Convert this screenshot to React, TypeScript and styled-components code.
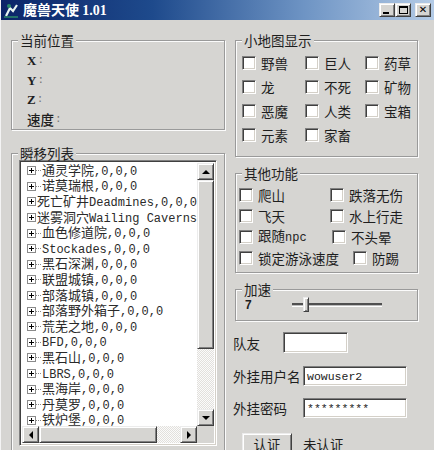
import React from "react";
import styled, { createGlobalStyle } from "styled-components";

const BG = "#d6d5d2";

const GlobalStyle = createGlobalStyle`
  html, body {
    margin: 0;
    padding: 0;
    background: ${BG};
  }
  body {
    font-family: "Noto Sans CJK SC", "Liberation Sans", sans-serif;
    font-size: 13.5px;
    color: #1e1e1e;
  }
  * {
    box-sizing: border-box;
  }
`;

const raised = `
  border: 1px solid;
  border-color: #ececec #404040 #404040 #ececec;
  box-shadow: inset 1px 1px #fff, inset -1px -1px #808080;
  background: ${BG};
`;

const sunken = `
  border: 1px solid;
  border-color: #808080 #fff #fff #808080;
  box-shadow: inset 1px 1px #404040, inset -1px -1px #d4d0c8;
  background: #fff;
`;

const ASCII = /^[\x20-\x7e]+$/;

function Mixed({ text }: { text: string }) {
  return (
    <>
      {text
        .split(/([\x20-\x7e]+)/)
        .filter(Boolean)
        .map((part, i) =>
          ASCII.test(part) ? <Latin key={i}>{part}</Latin> : <span key={i}>{part}</span>
        )}
    </>
  );
}

const places = [
  "通灵学院,0,0,0",
  "诺莫瑞根,0,0,0",
  "死亡矿井Deadmines,0,0,0",
  "迷雾洞穴Wailing Caverns,0,0,0",
  "血色修道院,0,0,0",
  "Stockades,0,0,0",
  "黑石深渊,0,0,0",
  "联盟城镇,0,0,0",
  "部落城镇,0,0,0",
  "部落野外箱子,0,0,0",
  "荒芜之地,0,0,0",
  "BFD,0,0,0",
  "黑石山,0,0,0",
  "LBRS,0,0,0",
  "黑海岸,0,0,0",
  "丹莫罗,0,0,0",
  "铁炉堡,0,0,0",
];

const minimap = [
  ["野兽", "巨人", "药草"],
  ["龙", "不死", "矿物"],
  ["恶魔", "人类", "宝箱"],
  ["元素", "家畜"],
];

const extras: { items: [string, string]; first: number }[] = [
  { items: ["爬山", "跌落无伤"], first: 91 },
  { items: ["飞天", "水上行走"], first: 91 },
  { items: ["跟随npc", "不头晕"], first: 93 },
  { items: ["锁定游泳速度", "防踢"], first: 114 },
];

function Check({ label }: { label: string }) {
  return (
    <CheckItem>
      <CheckBox />
      <span>
        <Mixed text={label} />
      </span>
    </CheckItem>
  );
}

export default function App() {
  return (
    <>
      <GlobalStyle />
      <Window>
        <TitleBar>
          <AppIcon viewBox="0 0 16 16">
            <path d="M3 14 L7 6 L10 9 L14 3" stroke="#e8f4f0" strokeWidth="2.2" fill="none" />
            <circle cx="6" cy="4" r="2" fill="#2a8a6a" />
            <path d="M1 15 H15" stroke="#2a8a6a" strokeWidth="1.5" />
          </AppIcon>
          <Title>
            魔兽天使 <TitleNum>1.01</TitleNum>
          </Title>
          <CaptionButtons>
            <CapBtn>
              <MinGlyph />
            </CapBtn>
            <CapBtn>
              <MaxGlyph />
            </CapBtn>
            <CapBtn $gap>
              <CloseGlyph>✕</CloseGlyph>
            </CapBtn>
          </CaptionButtons>
        </TitleBar>

        <Body>
          <LeftCol>
            <Group $top={20} $height={90}>
              <Legend>当前位置</Legend>
              <PosList>
                <PosRow>
                  <Axis>X</Axis>
                  <Colon>:</Colon>
                </PosRow>
                <PosRow>
                  <Axis>Y</Axis>
                  <Colon>:</Colon>
                </PosRow>
                <PosRow>
                  <Axis>Z</Axis>
                  <Colon>:</Colon>
                </PosRow>
                <PosRow>
                  <span>速度</span>
                  <Colon>:</Colon>
                </PosRow>
              </PosList>
            </Group>

            <Group $top={23} $height={300}>
              <Legend>瞬移列表</Legend>
              <ListBox>
                <TreeArea>
                  {places.map((p) => (
                    <TreeRow key={p}>
                      <Expander />
                      <DotLine />
                      <RowText>
                        <Mixed text={p} />
                      </RowText>
                    </TreeRow>
                  ))}
                </TreeArea>
                <VScroll>
                  <ArrowBtn $dir="up" />
                  <Thumb $size={169} />
                  <Track />
                  <ArrowBtn $dir="down" />
                </VScroll>
                <HScroll>
                  <ArrowBtn $dir="left" />
                  <Thumb $size={118} />
                  <Track />
                  <ArrowBtn $dir="right" />
                </HScroll>
                <Corner />
              </ListBox>
            </Group>
          </LeftCol>

          <RightCol>
            <Group $top={20} $height={117}>
              <Legend>小地图显示</Legend>
              <MapGrid>
                {minimap.flat().map((m) => (
                  <Check key={m} label={m} />
                ))}
              </MapGrid>
            </Group>

            <Group $top={16} $height={100}>
              <Legend>其他功能</Legend>
              <ExtraList>
                {extras.map((r) => (
                  <ExtraRow key={r.items[0]} $first={r.first}>
                    <Check label={r.items[0]} />
                    <Check label={r.items[1]} />
                  </ExtraRow>
                ))}
              </ExtraList>
            </Group>

            <Group $top={16} $height={32}>
              <Legend>加速</Legend>
              <SpeedRow>
                <SpeedValue>7</SpeedValue>
                <Slider>
                  <SliderTrack />
                  <SliderThumb style={{ left: 11 }} />
                </Slider>
              </SpeedRow>
            </Group>

            <Field $top={11} $height={21}>
              <FieldLabel $w={50}>队友</FieldLabel>
              <TextBox $w={65} />
            </Field>
            <Field $top={13} $height={20}>
              <FieldLabel $w={70}>外挂用户名</FieldLabel>
              <TextBox $w={104}>wowuser2</TextBox>
            </Field>
            <Field $top={12} $height={20}>
              <FieldLabel $w={70}>外挂密码</FieldLabel>
              <TextBox $w={104}>*********</TextBox>
            </Field>
            <ButtonRow>
              <PushButton>认证</PushButton>
              <span>未认证</span>
            </ButtonRow>
          </RightCol>
        </Body>
      </Window>
    </>
  );
}

const Window = styled.div`
  width: 434px;
  height: 450px;
  overflow: hidden;
  display: flex;
  flex-direction: column;
  background: ${BG};
  border-left: 1px solid #f4f4f4;
`;

const TitleBar = styled.div`
  height: 20px;
  flex-shrink: 0;
  display: flex;
  align-items: center;
  padding: 0 2px 0 2px;
  background: linear-gradient(90deg, #0b2468 0%, #1e4a8c 35%, #6e94c4 70%, #b4cbe6 100%);
`;

const AppIcon = styled.svg`
  width: 16px;
  height: 16px;
  flex-shrink: 0;
`;

const Title = styled.div`
  margin-left: 4px;
  color: #fff;
  font-weight: 700;
  font-size: 14px;
  line-height: 16px;
  white-space: nowrap;
`;

const TitleNum = styled.span`
  font-family: "Liberation Serif", serif;
  font-weight: 700;
`;

const CaptionButtons = styled.div`
  margin-left: auto;
  display: flex;
  align-items: center;
  padding-right: 1px;
`;

const CapBtn = styled.div<{ $gap?: boolean }>`
  ${raised}
  width: 16px;
  height: 14px;
  margin-left: ${(p) => (p.$gap ? "4px" : "0")};
  display: flex;
  align-items: center;
  justify-content: center;
`;

const MinGlyph = styled.span`
  width: 6px;
  height: 2px;
  background: #000;
  margin-top: 6px;
  margin-right: 2px;
`;

const MaxGlyph = styled.span`
  width: 9px;
  height: 8px;
  border: 1px solid #000;
  border-top-width: 2px;
`;

const CloseGlyph = styled.span`
  font-family: "DejaVu Sans", sans-serif;
  font-size: 10px;
  font-weight: 700;
  line-height: 1;
  color: #000;
`;

const Body = styled.div`
  flex: 1;
  display: flex;
  padding-left: 10px;
`;

const LeftCol = styled.div`
  width: 214px;
  display: flex;
  flex-direction: column;
`;

const RightCol = styled.div`
  width: 183px;
  margin-left: 10px;
  display: flex;
  flex-direction: column;
`;

const Group = styled.div<{ $top: number; $height: number }>`
  margin-top: ${(p) => p.$top}px;
  height: ${(p) => p.$height}px;
  flex-shrink: 0;
  border: 1px solid #9a9a9a;
  box-shadow: inset 1px 1px #fbfbfb, 1px 1px #fbfbfb;
`;

const Legend = styled.div`
  width: fit-content;
  height: 14px;
  line-height: 14px;
  margin: -8px 0 0 6px;
  padding: 0 2px;
  background: ${BG};
  white-space: nowrap;
`;

const PosList = styled.div`
  padding: 4px 0 0 15px;
  display: flex;
  flex-direction: column;
`;

const PosRow = styled.div`
  height: 19.5px;
  line-height: 19px;
  display: flex;
  align-items: center;
  font-weight: 500;
`;

const Axis = styled.span`
  font-family: "Liberation Serif", serif;
  font-weight: 700;
  font-size: 13px;
`;

const Colon = styled.span`
  font-family: "Liberation Mono", monospace;
  font-size: 11px;
  color: #777;
  margin-left: 1px;
`;

const ListBox = styled.div`
  ${sunken}
  margin: 0 0 0 7px;
  width: 198px;
  height: 286px;
  padding: 2px;
  display: grid;
  grid-template-columns: 1fr 17px;
  grid-template-rows: 1fr 17px;
`;

const TreeArea = styled.div`
  overflow: hidden;
  padding-left: 5px;
`;

const TreeRow = styled.div`
  height: 15.6px;
  display: flex;
  align-items: center;
  white-space: nowrap;
  color: #2a2a2a;
`;

const RowText = styled.span`
  display: block;
  line-height: 15px;
  font-size: 13px;
`;

const Expander = styled.span`
  width: 9px;
  height: 9px;
  flex-shrink: 0;
  border: 1px solid #8a8a8a;
  background: #fff;
  position: relative;

  &::before,
  &::after {
    content: "";
    position: absolute;
    background: #000;
  }
  &::before {
    left: 1px;
    right: 1px;
    top: 3px;
    height: 1px;
  }
  &::after {
    top: 1px;
    bottom: 1px;
    left: 3px;
    width: 1px;
  }
`;

const DotLine = styled.span`
  width: 5px;
  margin-right: 1px;
  border-top: 1px dotted #8a8a8a;
`;

const Latin = styled.span`
  font-family: "Liberation Mono", monospace;
  font-size: 12px;
`;

const VScroll = styled.div`
  display: flex;
  flex-direction: column;
`;

const HScroll = styled.div`
  display: flex;
`;

const Track = styled.div`
  flex: 1;
  background-color: #f0efec;
  background-image: repeating-conic-gradient(#e2e0dc 0 25%, #fbfbfb 0 50%);
  background-size: 2px 2px;
`;

const Thumb = styled.div<{ $size: number }>`
  ${raised}
  flex: 0 0 ${(p) => p.$size}px;
`;

const Corner = styled.div`
  background: ${BG};
`;

const arrowBorder: Record<string, string> = {
  up: "border-width: 0 4px 4px 4px; border-color: transparent transparent #000 transparent;",
  down: "border-width: 4px 4px 0 4px; border-color: #000 transparent transparent transparent;",
  left: "border-width: 4px 4px 4px 0; border-color: transparent #000 transparent transparent;",
  right: "border-width: 4px 0 4px 4px; border-color: transparent transparent transparent #000;",
};

const ArrowBtn = styled.div<{ $dir: "up" | "down" | "left" | "right" }>`
  ${raised}
  flex: 0 0 17px;
  width: 17px;
  height: 17px;
  display: flex;
  align-items: center;
  justify-content: center;

  &::after {
    content: "";
    width: 0;
    height: 0;
    border-style: solid;
    ${(p) => arrowBorder[p.$dir]}
  }
`;

const MapGrid = styled.div`
  padding: 4px 0 0 6px;
  display: grid;
  grid-template-columns: 63px 60px auto;
  grid-auto-rows: 24px;
  align-items: center;
  line-height: 18px;
`;

const CheckItem = styled.div`
  display: flex;
  align-items: center;
  gap: 5px;
  white-space: nowrap;
`;

const CheckBox = styled.span`
  ${sunken}
  width: 14px;
  height: 14px;
  flex-shrink: 0;
`;

const ExtraList = styled.div`
  padding: 4px 0 0 3px;
  display: flex;
  flex-direction: column;
  line-height: 18px;
`;

const ExtraRow = styled.div<{ $first: number }>`
  height: 21px;
  display: grid;
  grid-template-columns: ${(p) => p.$first}px auto;
  align-items: center;
`;

const SpeedRow = styled.div`
  height: 16px;
  margin-top: 1px;
  padding-left: 9px;
  display: flex;
  align-items: center;
`;

const SpeedValue = styled.span`
  font-family: "Liberation Sans", sans-serif;
  font-size: 12px;
  font-weight: 700;
  width: 7px;
`;

const Slider = styled.div`
  margin-left: 40px;
  width: 90px;
  height: 16px;
  position: relative;
  display: flex;
  align-items: center;
`;

const SliderTrack = styled.div`
  width: 100%;
  height: 4px;
  border-top: 2px solid #505050;
  border-bottom: 1px solid #fff;
  background: #bdbdbd;
`;

const SliderThumb = styled.div`
  ${raised}
  position: absolute;
  top: 0;
  width: 6px;
  height: 15px;
`;

const Field = styled.div<{ $top: number; $height: number }>`
  margin-top: ${(p) => p.$top}px;
  height: ${(p) => p.$height}px;
  display: flex;
  align-items: center;
  margin-left: -2px;
`;

const FieldLabel = styled.span<{ $w: number }>`
  width: ${(p) => p.$w}px;
  flex-shrink: 0;
  white-space: nowrap;
`;

const TextBox = styled.div<{ $w: number }>`
  ${sunken}
  width: ${(p) => p.$w}px;
  height: 100%;
  padding: 0 3px;
  display: flex;
  align-items: center;
  font-family: "Liberation Mono", monospace;
  font-size: 11.5px;
  color: #222;
`;

const ButtonRow = styled.div`
  margin-top: 15px;
  padding-left: 7px;
  display: flex;
  align-items: center;
  gap: 11px;
  line-height: 18px;
`;

const PushButton = styled.div`
  ${raised}
  width: 50px;
  height: 22px;
  display: flex;
  align-items: center;
  justify-content: center;
`;
